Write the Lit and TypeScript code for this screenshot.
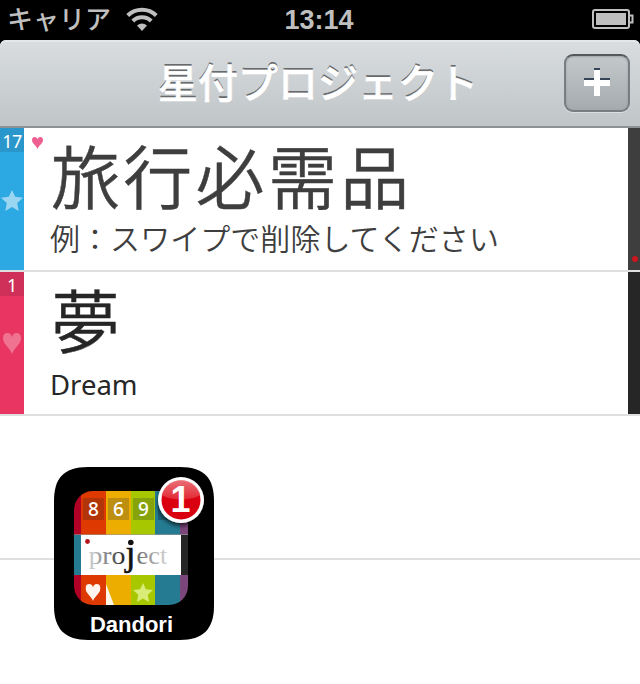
import { LitElement, html, css, svg } from "lit";
import { customElement, property } from "lit/decorators.js";

const HEART = "M50 100C40 72 0 54 0 25C0 9 10 0 25 0C39 0 48 9 50 20C52 9 61 0 75 0C90 0 100 9 100 25C100 54 60 72 50 100Z";
const STAR = "M50 0L64.5 31L100 35.5L73.500 59L80.500 95L50 77.500L19.500 95L26.500 59L0 35.500L35.500 31Z";

@customElement("status-bar")
class StatusBar extends LitElement {
  static styles = css`
    :host {
      display: flex; height: 40px; background: #000; color: #bfbfbf;
      align-items: center; position: relative;
      font-family: "Liberation Sans", "Noto Sans CJK JP", sans-serif;
    }
    .carrier { font-size: 26px; font-weight: 500; line-height: 40px; margin-left: 7px; white-space: nowrap; }
    .wifi { width: 32px; height: 24px; margin-left: 15px; margin-top: -2px; }
    .clock { position: absolute; left: 0; right: 2px; text-align: center; font-size: 27px; font-weight: bold; line-height: 40px; top: 0; }
    .battery { width: 42px; height: 20px; margin-left: auto; margin-right: 6px; margin-top: -2px; }
  `;
  render() {
    return html`
      <span class="carrier">キャリア</span>
      <svg class="wifi" viewBox="0 0 32 24">
        <g fill="none" stroke="#bfbfbf" stroke-width="4">
          <path d="M1.700 8.500A20.500 20.500 0 0 1 30.300 8.500" />
          <path d="M6.800 14A13 13 0 0 1 25.200 14" />
        </g>
        <path d="M11 18.500Q16 14.500 21 18.500L16 24Z" fill="#bfbfbf" />
      </svg>
      <span class="clock">13:14</span>
      <svg class="battery" viewBox="0 0 42 20">
        <rect x="1" y="1" width="36" height="18" rx="2" fill="none" stroke="#bfbfbf" stroke-width="2" />
        <rect x="4" y="4" width="30" height="12" fill="#bfbfbf" />
        <path d="M38 6.500H40.500V13.500H38" fill="none" stroke="#bfbfbf" stroke-width="2" />
      </svg>
    `;
  }
}

@customElement("nav-bar")
class NavBar extends LitElement {
  static styles = css`
    :host { display: block; height: 88px; background: #000; }
    .bar {
      box-sizing: border-box; height: 88px; border-bottom: 2px solid #8e9295;
      border-radius: 6px 6px 0 0; background: linear-gradient(#d9dddf, #c0c5c8);
      box-shadow: inset 0 2px 0 #e4e7e8;
      display: grid; grid-template-columns: 76px 1fr 76px; align-items: center;
    }
    .title {
      grid-column: 2; white-space: nowrap; color: #fff; font: 500 40px/60px "Noto Sans CJK JP", sans-serif;
      text-shadow: 0 -2px 0 #686b6d; padding-left: 82px; margin-top: -5px;
      -webkit-text-stroke: 0.6px #fff;
    }
    .add {
      box-sizing: border-box; width: 66px; height: 58px; border: 2px solid #777e81;
      border-top-color: #55595b; border-radius: 9px; padding: 0; margin-left: 0;
      background: linear-gradient(#c4c8ca, #a4abae);
      box-shadow: 0 1px 0 #dce0e2, inset 0 1px 2px rgba(80, 85, 88, .3);
      display: flex; align-items: center; justify-content: center;
    }
    .plus { width: 26px; height: 28px; flex: none; margin-top: -2px; }
  `;
  render() {
    return html`<div class="bar">
      <span class="title">星付プロジェクト</span>
      <button class="add" aria-label="追加">
        <svg class="plus" viewBox="0 0 26 28">
          <path d="M10 0H16V10H26V16H16V26H10V16H0V10H10Z" fill="#354457" />
          <path d="M10 2H16V12H26V18H16V28H10V18H0V12H10Z" fill="#fff" />
        </svg>
      </button>
    </div>`;
  }
}

@customElement("project-row")
class ProjectRow extends LitElement {
  @property() count = "";
  @property() name = "";
  @property() note = "";
  @property() kind = "";

  static styles = css`
    :host { display: block; height: 144px; }
    .row { box-sizing: border-box; height: 144px; border-bottom: 2px solid #dfdfdf; display: flex; color: #262626; background: #fff; }
    .strip { width: 24px; display: flex; flex-direction: column; align-items: center; }
    .count { width: 24px; height: 24px; color: #fff; text-align: center; font: 18px/26px "Noto Sans", sans-serif; letter-spacing: -0.5px; }
    .travel { color: #3e3e3e; }
    .travel .strip { background: #2ca8e2; }
    .travel .count { background: #2997cb; }
    .dream .strip { background: #e83562; }
    .dream .count { background: #cf3059; }
    .mark { width: 22px; height: 22px; margin-top: 38px; fill: #fff; opacity: .52; }
    .dream .mark { width: 18px; height: 21px; margin-top: 37px; opacity: .3; }
    .flag { width: 26px; }
    .tiny { display: block; width: 11px; height: 12px; margin: 9px 0 0 7.500px; fill: #ee5f91; }
    .words { flex: 1; white-space: nowrap; font-family: "Noto Sans CJK JP", sans-serif; }
    .name { font-size: 69px; line-height: 92px; height: 94px; font-weight: 350; letter-spacing: 3.300px; padding-left: 1px; -webkit-text-stroke: 0.4px currentColor; }
    .note { font-size: 30px; line-height: 30px; font-weight: 350; letter-spacing: 0.050px; }
    .dream .note { font: 27.500px/38px "Noto Sans", sans-serif; letter-spacing: 0; }
    .edge { width: 12px; background: #3e3e3e; display: flex; align-items: flex-end; justify-content: center; }
    .dream .edge { background: #262626; }
    .dot { width: 6px; height: 6px; border-radius: 50%; background: #cb161d; margin: 0 0 8px 1px; }
  `;
  render() {
    const travel = this.kind === "travel";
    return html`<div class="row ${this.kind}">
      <div class="strip">
        <div class="count">${this.count}</div>
        <svg class="mark" viewBox="0 0 100 100" preserveAspectRatio="none"><path d=${travel ? STAR : HEART} /></svg>
      </div>
      <div class="flag">
        ${travel ? html`<svg class="tiny" viewBox="0 0 100 100" preserveAspectRatio="none"><path d=${HEART} /></svg>` : ""}
      </div>
      <div class="words">
        <div class="name">${this.name}</div>
        <div class="note">${this.note}</div>
      </div>
      <div class="edge">${travel ? html`<span class="dot"></span>` : ""}</div>
    </div>`;
  }
}

@customElement("app-icon")
class AppIcon extends LitElement {
  static styles = css`
    :host { display: block; width: 160px; height: 173px; }
    .icon { display: block; width: 160px; height: 173px; overflow: visible; }
    .num { font: 500 19px "Noto Sans", sans-serif; fill: #fff; text-anchor: middle; }
    .word { font-family: "Liberation Serif", serif; font-size: 26px; }
    .jay { font: 36px "Liberation Serif", serif; fill: #111; stroke: #111; stroke-width: .6px; }
    .label { font: bold 22px "Liberation Sans", sans-serif; fill: #fff; }
    .badge { font: bold 36px "Liberation Sans", sans-serif; fill: #fff; text-anchor: middle; }
  `;
  render() {
    const columns: [number, number, string][] = [
      [20, 7, "#b00025"], [27, 25, "#dd3900"], [52, 25, "#edad00"],
      [77, 24, "#a7c800"], [101, 25, "#247b92"], [126, 8, "#7b467a"],
    ];
    const tiles: [number, string, string][] = [[29, "8", "#b13509"], [54, "6", "#be8e10"], [79, "9", "#86a30c"], [104, "", "#1c6176"]];
    return html`<svg class="icon" viewBox="0 0 160 173">
      <defs>
        <clipPath id="round"><rect x="20" y="24" width="114" height="114" rx="19" /></clipPath>
        <clipPath id="ball"><circle cx="127" cy="33" r="20" /></clipPath>
        <linearGradient id="red" x2="0" y2="1">
          <stop stop-color="#e2222c" /><stop offset=".5" stop-color="#da0010" /><stop offset="1" stop-color="#d8000f" />
        </linearGradient>
        <linearGradient id="gloss" x2="0" y2="1">
          <stop stop-color="#f2a9ac" /><stop offset="1" stop-color="#e33640" />
        </linearGradient>
        <linearGradient id="letters" gradientUnits="userSpaceOnUse" x1="34" y1="0" x2="114" y2="0">
          <stop stop-color="#d8d8d8" /><stop offset=".22" stop-color="#888" />
          <stop offset=".46" stop-color="#222" /><stop offset=".7" stop-color="#888" />
          <stop offset="1" stop-color="#d8d8d8" />
        </linearGradient>
        <filter id="shade" x="-30%" y="-30%" width="160%" height="170%"><feDropShadow dx="0" dy="3" stdDeviation="2" flood-opacity=".65" /></filter>
      </defs>
      <path d="M34 0H126C151 0 160 12 160 34V139C160 162 149 173 126 173H34C11 173 0 162 0 139V34C0 12 9 0 34 0Z" />
      <g clip-path="url(#round)">
        ${columns.map(([x, w, c]) => svg`<rect x=${x} y="24" width=${w} height="114" fill=${c} />`)}
        ${tiles.map(([x, n, c]) => svg`<rect x=${x} y="31" width="21" height="22" fill=${c} /><text class="num" x=${x + 10.5} y="49">${n}</text>`)}
        <rect x="20" y="67" width="114" height="1" fill="#999" opacity=".6" />
        <rect x="20" y="68" width="7" height="40" fill="#247b92" />
        <rect x="27" y="68" width="100" height="40" fill="#fff" />
        <rect x="127" y="68" width="7" height="40" fill="#252525" />
        <path d="M52 117L60 138H52Z" fill="#fff7e7" />
      </g>
      <circle cx="33.500" cy="74.500" r="2.400" fill="#b51219" />
      <text class="word" x="34.500" y="97" textLength="37" lengthAdjust="spacingAndGlyphs" fill="url(#letters)">pro</text>
      <text class="word" x="82.500" y="97" textLength="31" lengthAdjust="spacingAndGlyphs" fill="url(#letters)">ect</text>
      <text class="jay" x="71.500" y="97.500">ȷ</text>
      <circle cx="76.800" cy="75.500" r="2.800" fill="#111" />
      <svg x="31.500" y="117" width="15" height="17" viewBox="0 0 100 100" preserveAspectRatio="none"><path d=${HEART} fill="#fff4ee" /></svg>
      <svg x="79" y="116" width="20" height="20" viewBox="0 0 100 100"><path d=${STAR} fill="#daec78" /></svg>
      <text class="label" x="36" y="165" textLength="83">Dandori</text>
      <circle cx="127" cy="33" r="23" fill="#fff" filter="url(#shade)" />
      <circle cx="127" cy="33" r="19.500" fill="url(#red)" />
      <ellipse cx="127" cy="19" rx="26" ry="13.500" fill="url(#gloss)" clip-path="url(#ball)" opacity=".75" />
      <text class="badge" x="126.500" y="44.500">1</text>
    </svg>`;
  }
}

@customElement("app-root")
class AppRoot extends LitElement {
  static styles = css`
    :host { display: block; width: 640px; height: 684px; background: #fff; overflow: hidden; position: relative; }
    .blank { height: 142px; border-bottom: 2px solid #dfdfdf; }
    .floating { position: absolute; left: 54px; top: 467px; }
  `;
  render() {
    return html`
      <status-bar></status-bar>
      <nav-bar></nav-bar>
      <project-row kind="travel" count="17" name="旅行必需品" note="例：スワイプで削除してください"></project-row>
      <project-row kind="dream" count="1" name="夢" note="Dream"></project-row>
      <div class="blank"></div>
      <app-icon class="floating"></app-icon>
    `;
  }
}
